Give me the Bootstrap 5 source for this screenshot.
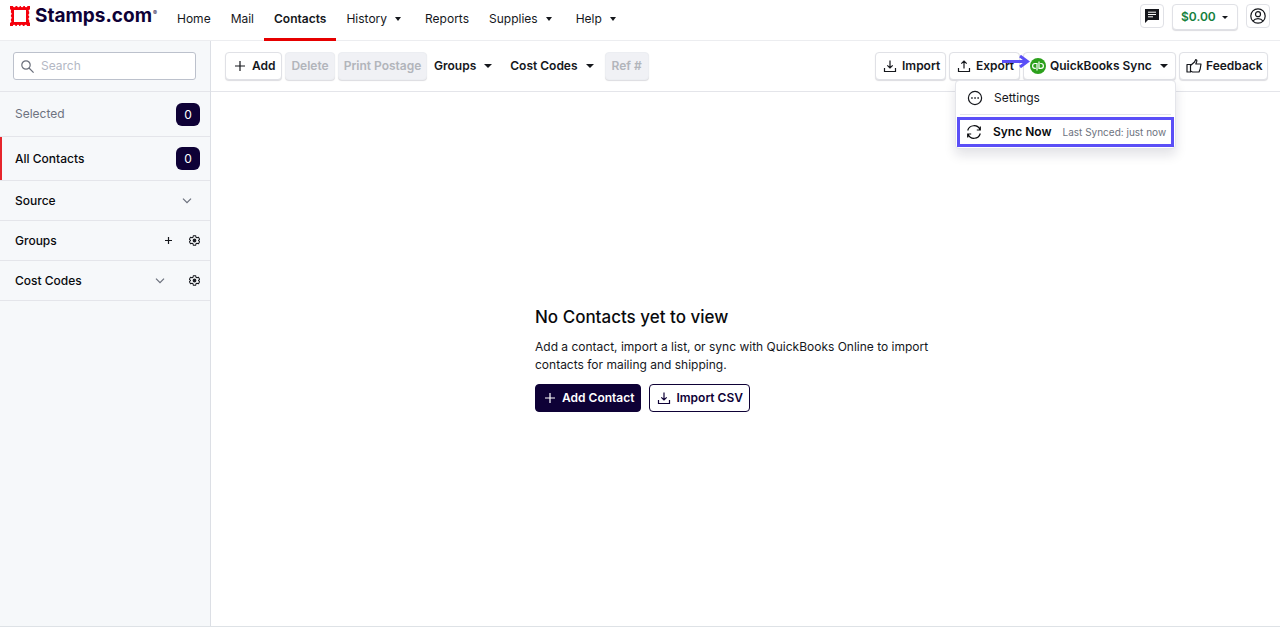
<!DOCTYPE html>
<html lang="en">
<head>
<meta charset="utf-8">
<meta name="viewport" content="width=device-width, initial-scale=1">
<title>Contacts - Stamps.com</title>
<link href="https://cdn.jsdelivr.net/npm/bootstrap@5.3.0/dist/css/bootstrap.min.css" rel="stylesheet">
<style>
  :root { --navy: #0e0136; --ink: #15171c; --line: #e4e5ea; --grey: #6d7380; --accent: #5b4ff7; }
  body { font-family: Inter, "Liberation Sans", sans-serif; font-size: 12px; line-height: 18px; color: var(--ink); }
  a { color: inherit; text-decoration: none; }
  svg { display: block; flex: none; }
  .ico { fill: none; stroke: currentColor; stroke-width: 1.2; }
  .ico-grey { color: #6a6f7b; }

  /* Top bar */
  .topbar { height: 41px; border-bottom: 1px solid #ecedf0; padding: 0 10px; }
  .brand { gap: 5px; width: 157px; height: 32px; }
  .brand-mark { margin-top: 6px; }
  .brand-name { font-size: 19px; line-height: 32px; font-weight: 700; color: var(--navy); }
  .reg { font-size: 6px; line-height: 6px; margin: 10px 0 0 -4px; color: var(--navy); }
  .main-nav .nav-link { height: 41px; padding: 10px 10px 0; color: var(--ink); }
  .main-nav .nav-link.active { font-weight: 600; box-shadow: inset 0 -3px #e60000; }
  .dropdown-toggle::after { border-width: 4px 3px 0; border-style: solid; border-color: currentColor transparent; vertical-align: 2px; margin-left: 8px; }

  /* Buttons */
  .tool { --bs-btn-font-size: 12px; --bs-btn-line-height: 18px; --bs-btn-font-weight: 600; --bs-btn-padding-x: 6px; --bs-btn-padding-y: 4px;
    --bs-btn-border-radius: 4px; --bs-btn-color: var(--ink); --bs-btn-border-color: #e0e1e6; --bs-btn-bg: #fff;
    --bs-btn-disabled-color: #b2b5bb; --bs-btn-disabled-bg: #f0f1f5; --bs-btn-disabled-border-color: #eceef2; --bs-btn-disabled-opacity: 1;
    display: inline-flex; align-items: center; gap: 4px; white-space: nowrap; box-shadow: 0 1px 1px rgba(20, 20, 50, .15); }
  .tool.dropdown-toggle::after { margin-left: 4px; border-width: 4px 4px 0; }
  .tool.plain { --bs-btn-border-color: transparent; --bs-btn-bg: transparent; box-shadow: none; }
  .tool.dark { --bs-btn-color: #fff; --bs-btn-bg: var(--navy); --bs-btn-border-color: var(--navy); box-shadow: none; }
  .tool.outline { --bs-btn-color: var(--navy); --bs-btn-border-color: var(--navy); box-shadow: none; }
  .tool.square { --bs-btn-padding-x: 3px; --bs-btn-padding-y: 3px; box-shadow: none; }
  .tool.balance { --bs-btn-color: #15803d; --bs-btn-padding-x: 8px; --bs-btn-padding-y: 3px; width: 66px; }
  .tool.balance::after { border-width: 3px 3px 0; border-top-color: var(--ink); margin-left: 2px; }
  .w-icon { width: 71px; }
  .w-sync { width: 153px; }
  .w-post, .w-feed { width: 89px; }
  .w-count { width: 44px; }
  .w-del { width: 50px; }
  .w-add { width: 57px; }
  .w-post, .w-count, .w-del { justify-content: center; padding-left: 0; padding-right: 0; }

  /* Sidebar */
  .side { width: 211px; flex: none; background: #f6f8fa; border-right: 1px solid #dcdfe5; }
  .side-search { height: 51px; padding: 11px 14px 0 13px; border-bottom: 1px solid var(--line); }
  .search-box { height: 28px; border: 1px solid #bcc1cc; border-radius: 3px; background: #fff; padding: 0 7px; gap: 7px; }
  .search-box input { border: 0; outline: 0; width: 100%; padding: 0; background: none; color: var(--ink); }
  .search-box input::placeholder { color: #b3b8c4; opacity: 1; }
  .side-row { height: 40px; padding: 0 10px 0 15px; border-bottom: 1px solid var(--line); font-weight: 500; color: #090a0d; }
  .side-row.tall { height: 44px; }
  .side-row.muted { height: 45px; font-weight: 400; color: var(--grey); }
  .side-row.current { box-shadow: inset 2px 0 #e6252b; }
  .count { width: 24px; height: 23px; line-height: 23px; border-radius: 6px; background: var(--navy); color: #fff; text-align: center; font-weight: 400; }
  .bare { border: 0; background: none; padding: 0; color: var(--ink); }

  /* Content */
  .toolbar { height: 51px; padding: 0 12px 0 14px; border-bottom: 1px solid var(--line); }
  .tool-group { gap: 3px; }
  .sync-menu { --bs-dropdown-font-size: 12px; --bs-dropdown-padding-y: 0; --bs-dropdown-border-color: #e4e5ea; --bs-dropdown-border-radius: 4px; --bs-dropdown-min-width: 221px;
    top: 100%; right: 0; width: 221px; box-shadow: 0 6px 12px rgba(20, 20, 50, .12); padding: 0 1px 1px; }
  .sync-menu .menu-link { height: 33px; padding: 0 10px; gap: 11px; color: var(--ink); }
  .sync-menu .menu-line { margin: 0 3px 2px; border-top: 1px solid var(--line); }
  .sync-menu .marked { height: 30px; border: 3px solid var(--accent); padding: 0 6px; gap: 11px; font-weight: 600; white-space: nowrap; color: #090a0d; }
  .synced { font-size: 10px; font-weight: 400; color: var(--grey); }
  .pointer { position: absolute; left: -21px; top: 3px; z-index: 5; }
  .empty { width: 421px; }
  .empty h1 { font-size: 17px; line-height: 22px; font-weight: 500; margin: 0 0 10px; color: #090a0d; }
  .empty p { margin: 0 0 10px; }
</style>
</head>
<body>
<div class="d-flex flex-column vh-100 border-bottom">
  <header class="topbar d-flex">
    <a class="brand d-flex" href="#" aria-label="Stamps.com">
      <svg class="brand-mark" width="20" height="20" viewBox="0 0 20 20"><path fill="#f5000c" fill-rule="evenodd" d="M0 0h3a1.300 1.300 0 0 0 2.600 0h1.600a1.300 1.300 0 0 0 2.600 0h1a1.300 1.300 0 0 0 2.600 0h1.400a1.300 1.300 0 0 0 2.600 0H20v3.400a1.300 1.300 0 0 0-.8 2.400v2a1.300 1.300 0 0 0 0 2.400v1.400a1.300 1.300 0 0 0 0 2.400v1.600a1.300 1.300 0 0 0 .8 1.400V20h-3a1.300 1.300 0 0 0-2.600 0h-1.500a1.300 1.300 0 0 0-2.600 0h-1a1.300 1.300 0 0 0-2.600 0H5.500a1.300 1.300 0 0 0-2.600 0H0v-3.200a1.300 1.300 0 0 0 .9-2.300v-1.500a1.300 1.300 0 0 0 0-2.400V8.900a1.300 1.300 0 0 0 0-2.400V5.200A1.300 1.300 0 0 0 0 3.200ZM4 4v12h12V4Z"/></svg>
      <span class="brand-name">Stamps.com</span><span class="reg">®</span>
    </a>
    <nav class="nav main-nav flex-nowrap">
      <a class="nav-link" href="#">Home</a>
      <a class="nav-link" href="#">Mail</a>
      <a class="nav-link active" href="#" aria-current="page">Contacts</a>
      <a class="nav-link dropdown-toggle" href="#">History</a>
      <a class="nav-link ms-1" href="#">Reports</a>
      <a class="nav-link dropdown-toggle" href="#">Supplies</a>
      <a class="nav-link dropdown-toggle ms-1" href="#">Help</a>
    </nav>
    <div class="d-flex align-items-start ms-auto pt-1">
      <button class="btn tool square" type="button" aria-label="Messages"><svg width="16" height="16" viewBox="0 0 16 16"><path fill="#15171c" d="M1 1h14v11H4l-3 3Z"/><path stroke="#fff" d="M4 4.200h8M4 6.500h8M4 8.800h5"/></svg></button>
      <button class="btn tool balance dropdown-toggle ms-2 me-2" type="button">$0.00</button>
      <button class="btn tool square" type="button" aria-label="Account"><svg class="ico" width="16" height="16" viewBox="0 0 16 16"><circle cx="8" cy="8" r="7.200"/><circle cx="8" cy="6.200" r="2.500"/><path d="M3 13c1.300-1.800 3-2.400 5-2.400s3.700.6 5 2.400"/></svg></button>
    </div>
  </header>

  <div class="d-flex flex-grow-1">
    <aside class="side">
      <div class="side-search">
        <label class="search-box d-flex align-items-center">
          <svg class="ico ico-grey" width="13" height="13" viewBox="0 0 13 13"><circle cx="5" cy="5" r="4.200"/><path d="m8 8 4.600 4.600"/></svg>
          <input type="search" placeholder="Search" aria-label="Search">
        </label>
      </div>
      <div class="side-row muted d-flex align-items-center justify-content-between"><span>Selected</span><span class="count">0</span></div>
      <div class="side-row tall current d-flex align-items-center justify-content-between"><span>All Contacts</span><span class="count">0</span></div>
      <div class="side-row d-flex align-items-center">Source
        <button class="bare ms-auto me-2" type="button" aria-label="Expand Source"><svg class="ico ico-grey" width="10" height="6" viewBox="0 0 10 6"><path d="m1 .7 4 4 4-4"/></svg></button>
      </div>
      <div class="side-row d-flex align-items-center">Groups
        <button class="bare ms-auto me-3" type="button" aria-label="Add group"><svg class="ico" width="9" height="9" viewBox="0 0 9 9"><path d="M4.500 1v7M1 4.500h7"/></svg></button>
        <button class="bare" type="button" aria-label="Group settings"><svg width="11" height="11" viewBox="0 0 24 24"><use href="#gear"/></svg></button>
      </div>
      <div class="side-row d-flex align-items-center">Cost Codes
        <button class="bare ms-auto me-4" type="button" aria-label="Expand Cost Codes"><svg class="ico ico-grey" width="10" height="6" viewBox="0 0 10 6"><path d="m1 .7 4 4 4-4"/></svg></button>
        <button class="bare" type="button" aria-label="Cost code settings"><svg width="11" height="11" viewBox="0 0 24 24"><g id="gear" fill="none" stroke="#15171c" stroke-width="2.200"><path stroke-linejoin="round" d="M9.500 1.500h5l.7 3.300 2.300 1.300 3.200-1.100 2.500 4.300-2.500 2.200v1l2.500 2.200-2.500 4.300-3.200-1.100-2.300 1.300-.7 3.300h-5l-.7-3.300-2.300-1.300-3.200 1.100-2.500-4.300 2.500-2.200v-1L.8 9.300 3.300 5l3.200 1.100 2.300-1.300Z"/><circle cx="12" cy="12" r="3" fill="#15171c"/></g></svg></button>
      </div>
    </aside>

    <main class="d-flex flex-column flex-grow-1">
      <div class="toolbar d-flex align-items-center">
        <div class="tool-group d-flex">
          <button class="btn tool w-add" type="button"><svg class="ico" width="16" height="16" viewBox="0 0 16 16"><path d="M8 3v10M3 8h10"/></svg>Add</button>
          <button class="btn tool w-del" type="button" disabled>Delete</button>
          <button class="btn tool w-post" type="button" disabled>Print Postage</button>
        </div>
        <button class="btn tool plain dropdown-toggle" type="button">Groups</button>
        <button class="btn tool plain dropdown-toggle ms-1" type="button">Cost Codes</button>
        <button class="btn tool w-count ms-1" type="button" disabled>Ref #</button>

        <div class="tool-group d-flex ms-auto">
          <button class="btn tool w-icon" type="button"><svg class="ico" width="16" height="16" viewBox="0 0 16 16"><path d="M8 2.500v7.500M5.300 7.300 8 10l2.700-2.700M2.500 10v3.500h11V10"/></svg>Import</button>
          <button class="btn tool w-icon" type="button"><svg class="ico" width="16" height="16" viewBox="0 0 16 16"><path d="M8 10.500V3M5.300 5.700 8 3l2.700 2.700M2.500 10v3.500h11V10"/></svg>Export</button>
          <div class="dropdown">
            <svg class="pointer" width="28" height="13" viewBox="0 0 28 13" fill="none" stroke="#5b4ff7" stroke-width="3"><path d="M0 6.500h25M18 1l7.500 5.500L18 12"/></svg>
            <button class="btn tool dropdown-toggle w-sync" type="button" aria-expanded="true"><svg width="16" height="16" viewBox="0 0 16 16"><circle cx="8" cy="8" r="8" fill="#2ca01c"/><g fill="none" stroke="#fff" stroke-width="1.200"><path d="M7 12.500V5.500H5a2.300 2.300 0 0 0 0 4.800h.8M9 3.500v6.800h2a2.300 2.300 0 0 0 0-4.800h-.8"/></g></svg>QuickBooks Sync</button>
            <div class="dropdown-menu sync-menu show">
              <a class="menu-link d-flex align-items-center" href="#"><svg class="ico" width="16" height="16" viewBox="0 0 16 16"><circle cx="8" cy="8" r="6.600"/><path stroke-width="1.500" d="M4.200 8h1.500M7.300 8h1.500M10.400 8h1.500"/></svg>Settings</a>
              <div class="menu-line"></div>
              <a class="marked d-flex align-items-center" href="#"><svg class="ico" width="16" height="16" viewBox="0 0 16 16"><path d="M1.700 6.500A6.500 6.500 0 0 1 14 5.800M14.300 9.500A6.500 6.500 0 0 1 2 10.200M14.300 2.500v3.500h-3.500M1.700 13.500v-3.500h3.500"/></svg>Sync Now<span class="synced">Last Synced: just now</span></a>
            </div>
          </div>
          <button class="btn tool w-feed" type="button"><svg class="ico" width="16" height="16" viewBox="0 0 16 16"><path stroke-linejoin="round" d="M1 6.500h3.500v7.500H1ZM4.500 7.500 8.500 4l1.300-2.500c1 .3 1.200 1 .9 2L9.800 6H15l-.8 5-1.200 3H6.500l-2-1"/></svg>Feedback</button>
        </div>
      </div>

      <div class="d-flex flex-grow-1 align-items-center justify-content-center">
        <section class="empty">
          <h1>No Contacts yet to view</h1>
          <p>Add a contact, import a list, or sync with QuickBooks Online to import<br>contacts for mailing and shipping.</p>
          <div class="d-flex gap-2">
            <button class="btn tool dark" type="button"><svg class="ico" width="16" height="16" viewBox="0 0 16 16"><path d="M8 3v10M3 8h10"/></svg>Add Contact</button>
            <button class="btn tool outline" type="button"><svg class="ico" width="16" height="16" viewBox="0 0 16 16"><path d="M8 2.500v7.500M5.300 7.300 8 10l2.700-2.700M2.500 10v3.500h11V10"/></svg>Import CSV</button>
          </div>
        </section>
      </div>
    </main>
  </div>
</div>
<script src="https://cdn.jsdelivr.net/npm/bootstrap@5.3.0/dist/js/bootstrap.bundle.min.js"></script>
</body>
</html>
